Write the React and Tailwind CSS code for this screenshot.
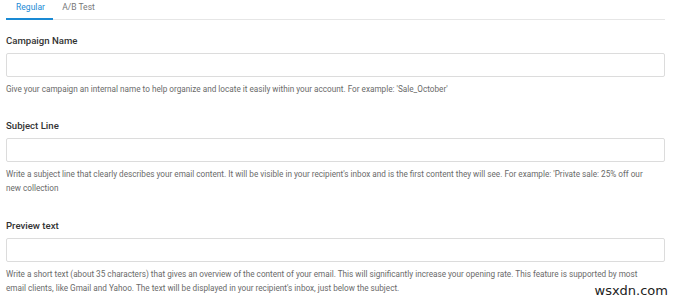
import React from 'react';

// Campaign setup form: tabs + three text fields with helper copy
const fields = [
  {
    label: 'Campaign Name',
    help: "Give your campaign an internal name to help organize and locate it easily within your account. For example: 'Sale_October'",
    top: 'mt-[14px]',
  },
  {
    label: 'Subject Line',
    help: "Write a subject line that clearly describes your email content. It will be visible in your recipient's inbox and is the first content they will see. For example: 'Private sale: 25% off our new collection",
    top: 'mt-[23px]',
  },
  {
    label: 'Preview text',
    help: "Write a short text (about 35 characters) that gives an overview of the content of your email. This will significantly increase your opening rate. This feature is supported by most email clients, like Gmail and Yahoo. The text will be displayed in your recipient's inbox, just below the subject.",
    top: 'mt-[24px]',
  },
];

function Field({ label, help, top }) {
  return (
    <div className={top}>
      <label className="block text-[9.6px] leading-[14px] font-medium text-[#333]">{label}</label>
      <input
        type="text"
        className="mt-[5px] block w-full h-[24px] border border-[#dcdcdc] rounded-[2px] bg-white outline-none"
      />
      <p className="mt-[5px] text-[8.2px] leading-[14px] text-[#6a6a6a] pr-[10px]">{help}</p>
    </div>
  );
}

export default function App() {
  return (
    <div className="relative w-[680px] h-[301px] bg-white overflow-hidden font-['Roboto',sans-serif]">
      {/* Tabs */}
      <div className="flex ml-[6px] w-[659px] h-[20px] border-b border-[#e6e6e6] text-[8.5px]">
        <div className="w-[47px] pl-[2px] flex items-center justify-center pb-[4px] text-[#1a8ad4] border-b-2 border-[#1a8ad4] -mb-px">
          Regular
        </div>
        <div className="w-[51px] flex items-center justify-center pb-[4px] text-[#777]">A/B Test</div>
      </div>

      <div className="ml-[6px] w-[659px]">
        {fields.map((f) => (
          <Field key={f.label} {...f} />
        ))}
      </div>

      {/* site watermark */}
      <span className="absolute right-[12px] bottom-[2px] text-[13px] leading-[16px] text-[#222] font-['DejaVu_Sans',sans-serif]">
        wsxdn.com
      </span>
    </div>
  );
}
